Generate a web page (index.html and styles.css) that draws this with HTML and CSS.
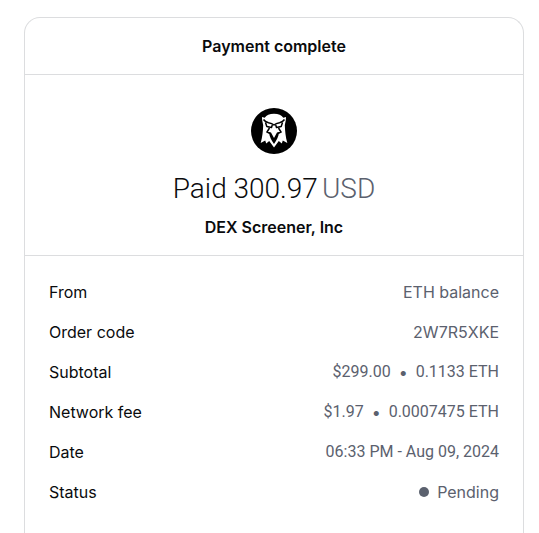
FILE: index.html
```
<!DOCTYPE html>
<html lang="en">
<head>
    <meta charset="utf-8">
    <meta name="viewport" content="width=device-width, initial-scale=1">
    <title>Payment complete</title>
    <link rel="stylesheet" href="styles.css">
</head>
<body>
    <main class="receipt">
        <header class="receipt-header">
            <h1>Payment complete</h1>
        </header>

        <section class="summary">
            <svg class="logo" viewBox="0 0 48 48" role="img" aria-label="DEX Screener">
                <circle cx="24" cy="24" r="23" fill="#000"/>
                <path fill="#fff" d="M24 6.700c-4.500 0-7.500 1.500-9.300 4l-2.700-.7c0 3 .6 5.500 1.200 8-.2 6-.8 12-2.500 18l4.500-2.500 1 3 3-2.500 4.800 6.500 4.800-6.500 3 2.500 1-3 4.500 2.500c-1.700-6-2.300-12-2.500-18 .6-2.500 1.200-5 1.200-8l-2.700.7c-1.800-2.500-4.800-4-9.300-4z"/>
                <path fill="none" stroke="#000" stroke-width="1.500" stroke-linejoin="round" d="M13.500 12.500c1.200 1.800 3 2.700 5 3.200 2.300.4 4 1 5.500 2.300 1.500-1.300 3.200-1.900 5.500-2.300 2-.5 3.800-1.400 5-3.200M15.500 15.500l1.300 4 4.700 1 .8-2.500M32.500 15.500l-1.300 4-4.700 1-.8-2.500"/>
                <path fill="none" stroke="#000" stroke-width="1.500" d="M19.500 21l-2.500 4 3 1.500M28.500 21l2.500 4-3 1.500"/>
                <path fill="#000" d="M19 25l2 .5 3 5.500 3-5.500 2-.5c-.4 4.800-2.500 8.500-5 12-2.500-3.500-4.600-7.200-5-12z"/>
            </svg>
            <p class="amount">Paid 300.97 <span class="currency">USD</span></p>
            <p class="merchant">DEX Screener, Inc</p>
        </section>

        <dl class="details">
            <div class="row">
                <dt>From</dt>
                <dd>ETH balance</dd>
            </div>
            <div class="row">
                <dt>Order code</dt>
                <dd>2W7R5XKE</dd>
            </div>
            <div class="row">
                <dt>Subtotal</dt>
                <dd class="figures"><span>$299.00</span><span class="separator">•</span><span>0.1133 ETH</span></dd>
            </div>
            <div class="row">
                <dt>Network fee</dt>
                <dd class="figures"><span>$1.97</span><span class="separator">•</span><span>0.0007475 ETH</span></dd>
            </div>
            <div class="row">
                <dt>Date</dt>
                <dd class="figures">06:33 PM - Aug 09, 2024</dd>
            </div>
            <div class="row">
                <dt>Status</dt>
                <dd><span class="status-dot"></span>Pending</dd>
            </div>
        </dl>
    </main>
</body>
</html>
```
FILE: styles.css
```
* {
    box-sizing: border-box;
}

body {
    display: flex;
    min-height: 100vh;
    margin: 0;
    padding: 17px 15px 0 24px;
    background-color: #fff;
    color: #0a0b0d;
    font-family: Inter, "Liberation Sans", sans-serif;
    font-size: 16px;
    line-height: 24px;
}

.receipt {
    flex: 1;
    border: 1px solid #dcdddf;
    border-bottom: none;
    border-radius: 16px 16px 0 0;
}

.receipt-header {
    padding: 16px;
    border-bottom: 1px solid #dcdddf;
    text-align: center;
}

h1 {
    margin: 0;
    font-size: 16px;
    font-weight: 600;
}

.summary {
    display: flex;
    flex-direction: column;
    align-items: center;
    padding: 32px 24px 16px;
    border-bottom: 1px solid #dcdddf;
}

.logo {
    width: 48px;
    height: 48px;
}

.amount {
    display: flex;
    gap: 4px;
    margin: 16px 0 8px;
    font-family: Roboto, "Liberation Sans", sans-serif;
    font-size: 28px;
    font-weight: 300;
    line-height: 36px;
}

.currency {
    color: #5b616e;
}

.merchant {
    margin: 0;
    font-weight: 600;
}

.details {
    display: flex;
    flex-direction: column;
    gap: 16px;
    margin: 0;
    padding: 24px;
}

.row {
    display: flex;
    justify-content: space-between;
}

dd {
    display: flex;
    align-items: center;
    gap: 8px;
    margin: 0;
    color: #5b616e;
}

.figures {
    font-family: Roboto, "Liberation Sans", sans-serif;
}

.separator {
    font-family: Inter, "Liberation Sans", sans-serif;
}

.status-dot {
    width: 10px;
    height: 10px;
    border-radius: 50%;
    background-color: #5b616e;
}
```
